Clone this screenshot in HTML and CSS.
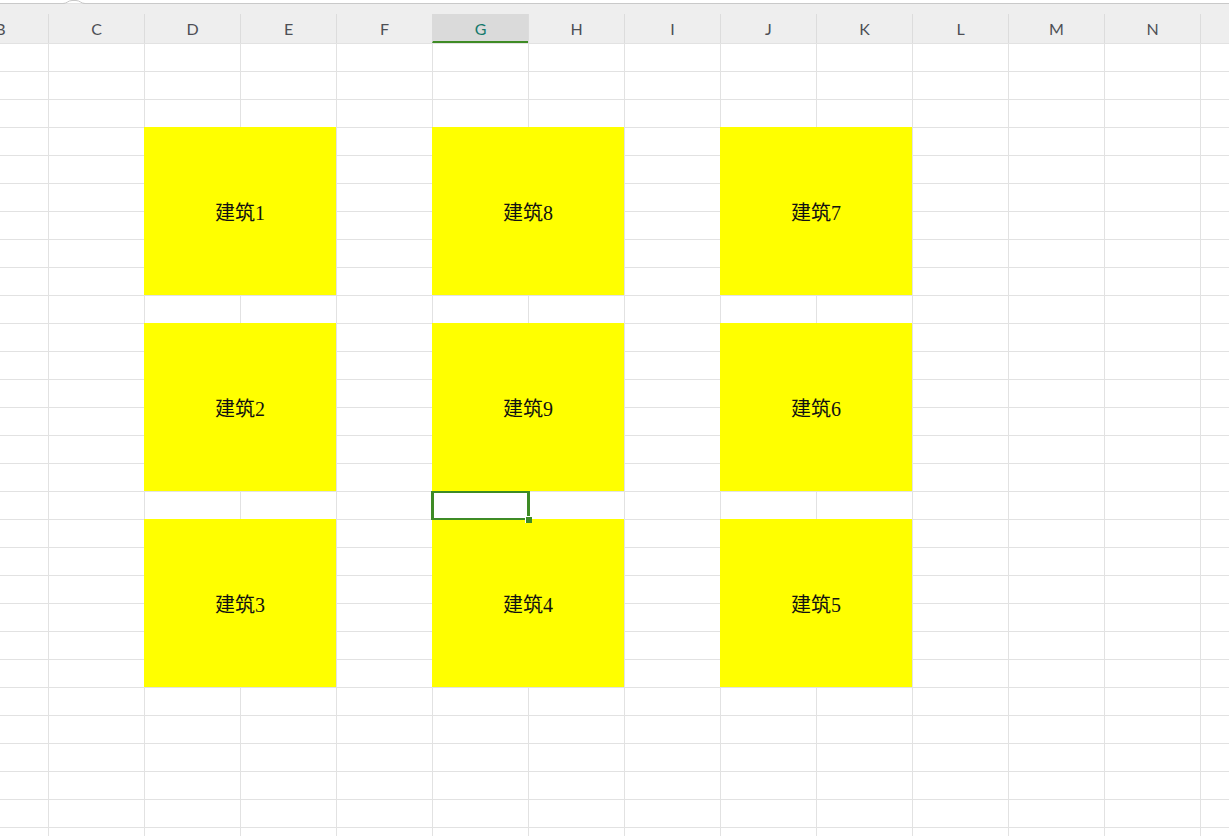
FILE: index.html
```html
<!DOCTYPE html>
<html lang="zh-CN">
<head>
    <meta charset="UTF-8">
    <title>Sheet1</title>
    <link rel="stylesheet" href="styles.css">
</head>
<body>
<div class="topbar">
    <svg class="tab" width="30" height="5" viewBox="0 0 30 5">
        <path d="M0 3.5 H4 C8 3.5 9 0.5 13 0.5 H17 C21 0.5 22 3.5 26 3.5 H30" fill="#fff" stroke="#c9c9c9" stroke-width="1"/>
    </svg>
</div>
<div class="colheads">
    <div class="colhead">B</div>
    <div class="colhead">C</div>
    <div class="colhead">D</div>
    <div class="colhead">E</div>
    <div class="colhead">F</div>
    <div class="colhead active">G</div>
    <div class="colhead">H</div>
    <div class="colhead">I</div>
    <div class="colhead">J</div>
    <div class="colhead">K</div>
    <div class="colhead">L</div>
    <div class="colhead">M</div>
    <div class="colhead">N</div>
    <div class="colhead"></div>
</div>
<div class="sheet">
    <div class="merged c-d r-1">建筑1</div>
    <div class="merged c-g r-1">建筑8</div>
    <div class="merged c-j r-1">建筑7</div>
    <div class="merged c-d r-2">建筑2</div>
    <div class="merged c-g r-2">建筑9</div>
    <div class="merged c-j r-2">建筑6</div>
    <div class="merged c-d r-3">建筑3</div>
    <div class="merged c-g r-3">建筑4</div>
    <div class="merged c-j r-3">建筑5</div>
    <div class="selected"><span class="handle"></span></div>
</div>
</body>
</html>
```
FILE: styles.css
```css
body {
    margin: 0;
    padding: 0;
    background-color: #ffffff;
    overflow: hidden;
    width: 1229px;
    height: 836px;
    font-family: "Liberation Serif", "Noto Sans CJK SC", serif;
}

.topbar {
    position: relative;
    height: 3px;
    background-color: #ffffff;
    border-bottom: 1px solid #c9c9c9;
}

.topbar .tab {
    position: absolute;
    left: 59px;
    top: 0;
}

.colheads {
    display: flex;
    height: 39px;
    margin-left: -48px;
    background-color: #eeeeee;
    box-sizing: border-box;
    padding-top: 10px;
}

.colhead {
    flex: 0 0 96px;
    box-sizing: border-box;
    border-left: 1px solid #dcdcdc;
    display: flex;
    align-items: center;
    justify-content: center;
    font-family: Lato, "Noto Sans", sans-serif;
    font-size: 16px;
    color: #4d4f55;
}

.colhead.active {
    background-color: #dadada;
    color: #16796c;
    border-left-color: #dadada;
    border-bottom: 2px solid #3e8b25;
    padding-top: 2px;
}

.sheet {
    display: grid;
    grid-template-columns: repeat(14, 96px);
    grid-template-rows: repeat(29, 28px);
    margin-left: -48px;
    background-image:
        repeating-linear-gradient(to right, #e2e2e2 0 1px, transparent 1px 96px),
        repeating-linear-gradient(to bottom, #e2e2e2 0 1px, transparent 1px 28px);
}

.merged {
    background-color: #ffff00;
    display: flex;
    align-items: center;
    justify-content: center;
    font-size: 20px;
    color: #111111;
    grid-row-end: span 6;
    grid-column-end: span 2;
}

.c-d { grid-column-start: 3; }
.c-g { grid-column-start: 6; }
.c-j { grid-column-start: 9; }

.r-1 { grid-row-start: 4; }
.r-2 { grid-row-start: 11; }
.r-3 { grid-row-start: 18; }

.selected {
    grid-column: 6;
    grid-row: 17;
    position: relative;
    margin: 0 -2px -1px -1px;
    border-style: solid;
    border-color: #3e8b25;
    border-width: 2px 3px;
}

.selected .handle {
    position: absolute;
    right: -5px;
    bottom: -5px;
    width: 6px;
    height: 6px;
    background-color: #3e8b25;
    border-left: 1px solid #ffffff;
    border-top: 1px solid #ffffff;
}
```
